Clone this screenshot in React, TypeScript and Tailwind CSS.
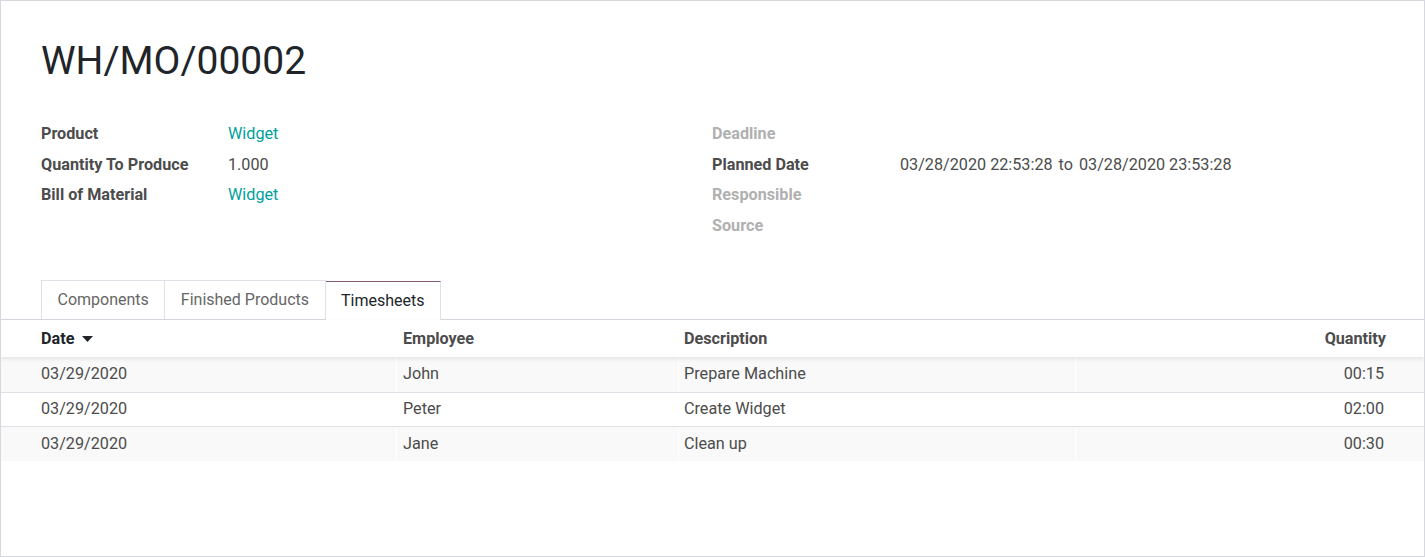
import React from "react";

const rows = [
  { date: "03/29/2020", emp: "John", desc: "Prepare Machine", qty: "00:15" },
  { date: "03/29/2020", emp: "Peter", desc: "Create Widget", qty: "02:00" },
  { date: "03/29/2020", emp: "Jane", desc: "Clean up", qty: "00:30" },
];

export default function App() {
  return (
    <div
      className="w-[1425px] h-[557px] bg-white border border-[#d5d8de] text-[16.2px] text-[#4c4c4c] overflow-hidden"
      style={{ fontFamily: "Roboto, 'Liberation Sans', sans-serif" }}
    >
      <div className="px-[40px] pt-[36px]">
        <h1 className="text-[39px] leading-[48px] text-[#212529] font-normal">WH/MO/00002</h1>
        <div className="flex mt-[34px]">
          <div className="w-[671px] flex flex-col">
            {[
              ["Product", "Widget", true],
              ["Quantity To Produce", "1.000", false],
              ["Bill of Material", "Widget", true],
            ].map(([l, v, link]) => (
              <div key={l as string} className="flex h-[30.6px] items-center">
                <div className="w-[187px] font-bold text-[#4c4c4c]">{l}</div>
                <div className={link ? "text-[#00a09d]" : "text-[#4c4c4c]"}>{v}</div>
              </div>
            ))}
          </div>
          <div className="flex flex-col">
            <div className="flex h-[30.6px] items-center">
              <div className="w-[188px] font-bold text-[#b0b0b0]">Deadline</div>
            </div>
            <div className="flex h-[30.6px] items-center">
              <div className="w-[188px] font-bold text-[#4c4c4c]">Planned Date</div>
              <div className="text-[#4c4c4c]">
                03/28/2020 22:53:28<span className="mx-[6px]">to</span>03/28/2020 23:53:28
              </div>
            </div>
            <div className="flex h-[30.6px] items-center">
              <div className="w-[188px] font-bold text-[#b0b0b0]">Responsible</div>
            </div>
            <div className="flex h-[30.6px] items-center">
              <div className="w-[188px] font-bold text-[#b0b0b0]">Source</div>
            </div>
          </div>
        </div>
        <div className="flex mt-[39px] h-[39px] items-stretch text-[16px]">
          <div className="px-[15.5px] flex items-center border border-b-0 border-[#dee2e6] text-[#666]">Components</div>
          <div className="px-[15.5px] flex items-center border border-l-0 border-b-0 border-[#dee2e6] text-[#666]">Finished Products</div>
          <div className="px-[15.5px] flex items-center border border-l-0 border-b-0 border-[#dee2e6] border-t-[#875a7b] text-[#212529] bg-white relative top-[1px] h-[39px]">
            Timesheets
          </div>
        </div>
      </div>
      <div className="border-t border-[#d5d8de]">
        <div className="grid grid-cols-[396px_282px_397px_1fr] h-[37px] items-center font-bold shadow-[0_2px_4px_rgba(0,0,0,0.09)] relative">
          <div className="pl-[40px] text-[#212529] flex items-center gap-[8px]">
            Date
            <svg width="11" height="6" viewBox="0 0 11 6"><path d="M0 0h11L5.5 6z" fill="#212529" /></svg>
          </div>
          <div className="pl-[6px]">Employee</div>
          <div className="pl-[5px]">Description</div>
          <div className="pr-[38px] text-right">Quantity</div>
        </div>
        {rows.map((r, i) => (
          <div
            key={i}
            className={`grid grid-cols-[396px_282px_397px_1fr] h-[34.5px] items-center ${i % 2 === 0 ? "bg-[#f9f9f9]" : "bg-white"} ${i > 0 ? "border-t border-[#dee2e6]" : ""}`}
          >
            <div className="pl-[40px] border-r border-white h-full flex items-center">{r.date}</div>
            <div className="pl-[6px] border-r border-white h-full flex items-center">{r.emp}</div>
            <div className="pl-[5px] border-r border-white h-full flex items-center">{r.desc}</div>
            <div className="pr-[40px] text-right">{r.qty}</div>
          </div>
        ))}
      </div>
    </div>
  );
}
